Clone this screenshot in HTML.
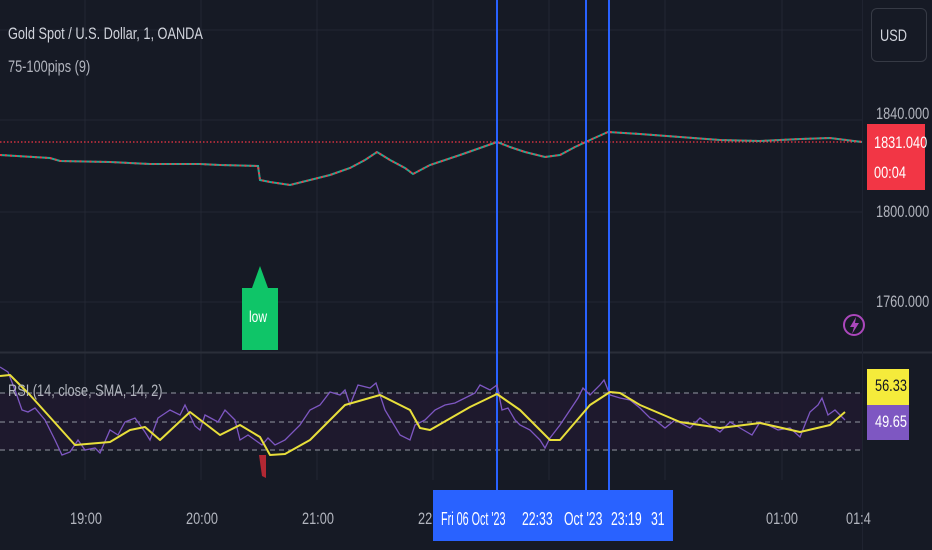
<!DOCTYPE html>
<html><head><meta charset="utf-8"><style>
html,body{margin:0;padding:0;background:#161a25;}
body{width:932px;height:550px;position:relative;overflow:hidden;font-family:"Liberation Sans",sans-serif;}
.t{position:absolute;color:#b2b5be;font-size:16px;white-space:nowrap;transform:scaleX(0.75);transform-origin:left top;}
.w{color:#fff;font-size:18px;top:509px;}
</style></head><body>
<svg width="932" height="550" style="position:absolute;left:0;top:0">
<g stroke="#232733" stroke-width="1">
<line x1="85" y1="0" x2="85" y2="480"/><line x1="201" y1="0" x2="201" y2="480"/><line x1="317" y1="0" x2="317" y2="480"/><line x1="433" y1="0" x2="433" y2="480"/><line x1="549" y1="0" x2="549" y2="480"/><line x1="665" y1="0" x2="665" y2="480"/><line x1="782" y1="0" x2="782" y2="480"/>
<line x1="0" y1="30" x2="862" y2="30"/><line x1="0" y1="120" x2="862" y2="120"/><line x1="0" y1="212" x2="862" y2="212"/><line x1="0" y1="302" x2="862" y2="302"/>
</g>
<line x1="0" y1="352.5" x2="932" y2="352.5" stroke="#2a2e39" stroke-width="2"/>
<line x1="862.5" y1="0" x2="862.5" y2="550" stroke="#1f2330"/>
<rect x="0" y="393" width="862" height="57" fill="#21192f" opacity="0.8"/>
<g stroke="#7b7f8a" stroke-dasharray="5,4" stroke-width="1.2">
<line x1="0" y1="393" x2="862" y2="393"/><line x1="0" y1="422" x2="862" y2="422"/><line x1="0" y1="450" x2="862" y2="450"/></g>
<line x1="0" y1="142" x2="862" y2="142" stroke="#f23645" stroke-dasharray="1.5,2" stroke-width="1.2"/>
<polyline fill="none" stroke="#22ab94" stroke-width="2" points="0,155 50,158 60,161 110,162 150,164 200,164 220,165 258,166 260,180 270,182 290,185 310,180 330,175 350,168 365,160 377,152 390,160 405,168 413,174 430,165 460,155 480,148 497,142 510,147 525,152 545,157 560,155 575,147 590,140 608,132 640,134 680,137 720,140 760,141 800,139 830,138 862,142"/>
<polyline fill="none" stroke="#f23645" stroke-width="2" stroke-dasharray="2,3" points="0,155 50,158 60,161 110,162 150,164 200,164 220,165 258,166 260,180 270,182 290,185 310,180 330,175 350,168 365,160 377,152 390,160 405,168 413,174 430,165 460,155 480,148 497,142 510,147 525,152 545,157 560,155 575,147 590,140 608,132 640,134 680,137 720,140 760,141 800,139 830,138 862,142"/>
<g stroke="#2962ff" stroke-width="2"><line x1="497" y1="0" x2="497" y2="490"/><line x1="586" y1="0" x2="586" y2="490"/><line x1="609" y1="0" x2="609" y2="490"/></g>
<path d="M259,455 L266,455 L266,478 L262,476 Z" fill="#b22833"/>
<polyline fill="none" stroke="#7e57c2" stroke-width="1.3" points="0,367 8,372 15,390 22,410 28,412 35,408 45,420 55,440 62,455 70,452 78,440 85,450 95,448 100,453 110,430 118,435 125,422 135,418 145,432 150,440 158,418 170,410 180,415 185,405 195,426 200,430 205,415 218,422 225,410 235,420 240,440 248,435 255,440 262,445 268,438 275,445 285,440 300,425 310,410 320,405 330,392 340,395 345,390 350,405 358,385 370,388 376,383 385,410 400,435 410,440 415,425 425,420 435,410 445,405 455,403 465,398 475,393 480,385 490,390 497,385 502,410 508,408 515,420 520,425 530,430 540,440 545,448 550,438 560,425 570,410 578,398 583,388 590,395 600,385 604,380 610,395 620,398 630,400 640,408 650,418 655,420 665,428 675,420 690,428 700,418 710,425 720,432 730,422 740,428 752,435 760,422 768,425 778,430 790,428 800,437 810,412 818,405 822,398 828,415 835,410 845,420"/>
<polyline fill="none" stroke="#e8df3b" stroke-width="2" stroke-linejoin="round" points="0,376 10,375 30,395 75,445 110,442 130,430 145,427 160,440 190,412 220,435 240,425 260,437 270,455 285,454 310,440 345,405 380,395 410,410 420,428 430,430 470,407 497,394 520,410 550,440 560,440 590,405 610,392 620,393 640,405 680,422 720,428 760,423 800,432 830,425 845,412"/>
<circle cx="854" cy="325" r="10" fill="none" stroke="#ab47bc" stroke-width="2"/>
<path d="M856,317 L850,327 L854,327 L852,334 L859,323 L855,323 Z" fill="#ab47bc"/>
<path d="M242,288 L252,288 L260,266 L268,288 L278,288 L278,350 L242,350 Z" fill="#0fc568"/>
</svg>
<div class="t" style="left:8px;top:24px;font-size:17px;color:#d1d4dc">Gold Spot / U.S. Dollar, 1, OANDA</div>
<div class="t" style="left:8px;top:57px;font-size:17px">75-100pips (9)</div>
<div class="t" style="left:8px;top:381px;font-size:17px">RSI (14, close, SMA, 14, 2)</div>
<div class="t" style="left:249px;top:309px;color:#fff">low</div>
<div style="position:absolute;left:871px;top:8px;width:56px;height:54px;border:1px solid #363a45;border-radius:6px;box-sizing:border-box;"></div>
<div class="t" style="left:880px;top:26px;color:#d1d4dc;font-size:17px">USD</div>
<div class="t" style="left:876px;top:104px;font-size:17px">1840.000</div>
<div style="position:absolute;left:867px;top:124px;width:58px;height:66px;background:#f23645"></div>
<div class="t" style="left:874px;top:133px;color:#fff;font-size:17px">1831.040</div>
<div class="t" style="left:874px;top:163px;color:#fff;font-size:17px">00:04</div>
<div class="t" style="left:876px;top:202px;font-size:17px">1800.000</div>
<div class="t" style="left:876px;top:292px;font-size:17px">1760.000</div>
<div style="position:absolute;left:867px;top:369px;width:42px;height:36px;background:#f5eb3b"></div>
<div style="position:absolute;left:867px;top:405px;width:42px;height:35px;background:#7e57c2"></div>
<div class="t" style="left:875px;top:376px;color:#131722;font-size:17px">56.33</div>
<div class="t" style="left:875px;top:412px;color:#fff;font-size:17px">49.65</div>
<div class="t" style="left:70px;top:509px;font-size:17px">19:00</div>
<div class="t" style="left:186px;top:509px;font-size:17px">20:00</div>
<div class="t" style="left:302px;top:509px;font-size:17px">21:00</div>
<div class="t" style="left:418px;top:509px;font-size:17px">22:</div>
<div class="t" style="left:766px;top:509px;font-size:17px">01:00</div>
<div class="t" style="left:846px;top:509px;font-size:17px">01:4</div>
<div style="position:absolute;left:433px;top:490px;width:240px;height:51px;background:#2962ff"></div>
<div class="t w" style="left:441px;transform:scaleX(0.6)">Fri 06 Oct '23</div>
<div class="t w" style="left:522px;transform:scaleX(0.68)">22:33</div>
<div class="t w" style="left:564px;transform:scaleX(0.68)">Oct '23</div>
<div class="t w" style="left:611px;transform:scaleX(0.68)">23:19</div>
<div class="t w" style="left:651px;transform:scaleX(0.68)">31</div>
</body></html>
